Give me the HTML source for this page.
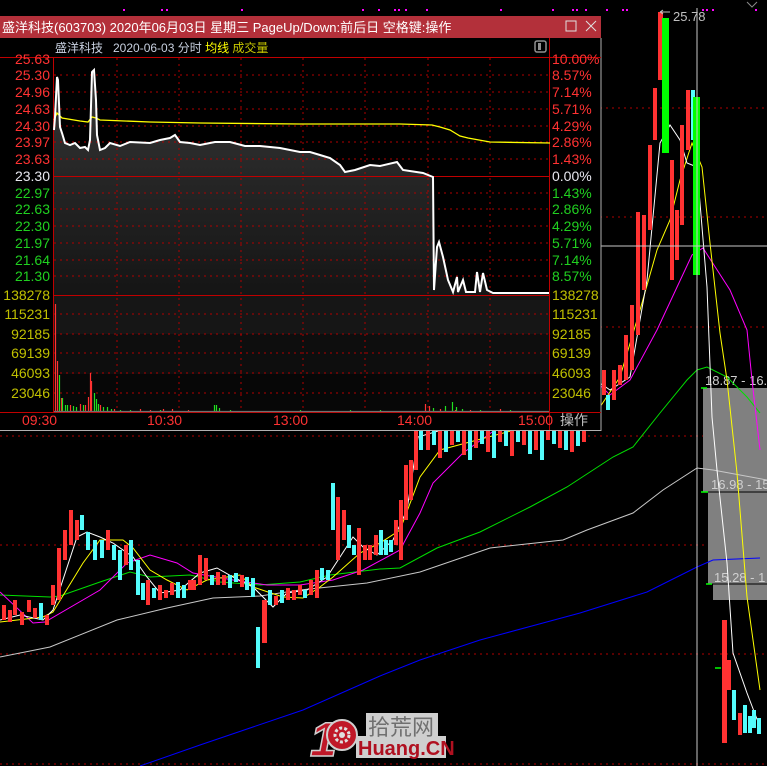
<!DOCTYPE html>
<html><head><meta charset="utf-8">
<style>
html,body{margin:0;padding:0;background:#000;overflow:hidden}
svg{display:block}
text{font-family:"Liberation Sans","Noto Sans CJK SC",sans-serif}
</style></head>
<body>
<svg width="767" height="766" viewBox="0 0 767 766" xmlns="http://www.w3.org/2000/svg">
<defs>
<linearGradient id="fg" x1="0" y1="0" x2="0" y2="1">
<stop offset="0" stop-color="#383838"/><stop offset="0.5" stop-color="#252525"/><stop offset="1" stop-color="#151515"/>
</linearGradient>
</defs>
<rect width="767" height="766" fill="#000"/>
<g stroke="#b00000" stroke-width="1" stroke-dasharray="2,4">
<line x1="600" y1="108" x2="767" y2="108"/>
<line x1="600" y1="217" x2="767" y2="217"/>
<line x1="600" y1="327" x2="767" y2="327"/>
<line x1="0" y1="436" x2="767" y2="436"/>
<line x1="0" y1="545" x2="767" y2="545"/>
<line x1="0" y1="654" x2="767" y2="654"/>
<line x1="0" y1="764" x2="767" y2="764"/>
</g>
<g fill="#ff00ff">
<rect x="123" y="9" width="2" height="2"/><rect x="161" y="9" width="2" height="2"/><rect x="166" y="9" width="2" height="2"/><rect x="241" y="9" width="2" height="2"/>
<rect x="362" y="9" width="2" height="2"/><rect x="378" y="9" width="2" height="2"/><rect x="394" y="9" width="2" height="2"/><rect x="398" y="9" width="2" height="2"/><rect x="405" y="9" width="2" height="2"/><rect x="426" y="9" width="2" height="2"/>
<rect x="500" y="9" width="2" height="2"/><rect x="552" y="9" width="2" height="2"/><rect x="572" y="9" width="2" height="2"/><rect x="576" y="9" width="2" height="2"/><rect x="585" y="9" width="2" height="2"/>
<rect x="606" y="9" width="2" height="2"/><rect x="622" y="9" width="2" height="2"/><rect x="626" y="9" width="2" height="2"/><rect x="702" y="9" width="2" height="2"/><rect x="706" y="9" width="2" height="2"/><rect x="712" y="9" width="2" height="2"/><rect x="755" y="9" width="2" height="2"/>
</g>
<path d="M703 388H767V600H713V584H708V492H703Z" fill="#808080"/>
<g stroke="#000" stroke-width="1"><line x1="703" y1="492" x2="767" y2="492"/><line x1="708" y1="584" x2="767" y2="584"/></g>
<g fill="#d0d0d0" font-size="13">
<text x="705" y="385">18.87 - 16.</text>
<text x="711" y="489">16.98 - 15</text>
<text x="714" y="582">15.28 - 1</text>
</g>
<g stroke="#00ff00" stroke-width="1.5"><line x1="701" y1="388" x2="707" y2="388"/><line x1="701" y1="492" x2="708" y2="492"/><line x1="706" y1="584" x2="712" y2="584"/><line x1="715" y1="668" x2="721" y2="668"/></g>
<g fill="none" stroke-width="1">
<polyline stroke="#0000ff" points="140,766 200,745 303,710 380,676 420,660 480,640 580,613 647,592 697,567 713,560 760,558"/>
<polyline stroke="#c8c8c8" points="0,657 50,647 117,620 167,608 213,598 260,596 300,590 367,583 420,572 490,548 563,540 587,530 633,513 663,490 697,468 713,470 767,480"/>
<polyline stroke="#00e000" points="0,595 50,597 60,596 100,582 130,572 150,577 190,575 220,582 260,585 300,582 330,575 380,569 400,568 437,548 480,532 530,507 567,487 613,457 633,447 660,413 687,380 697,370 707,367 727,377 747,397 760,413"/>
<polyline stroke="#ff00ff" points="0,592 33,623 45,622 100,590 127,563 150,555 177,563 193,573 233,580 267,585 300,585 333,580 363,570 400,550 420,513 433,483 463,453 513,417 553,397 600,385 610,395 630,380 657,330 692,255 703,248 730,290 747,330 752,380 760,450"/>
<polyline stroke="#ffff00" points="0,622 43,617 53,612 83,563 100,540 123,540 133,548 150,570 167,580 187,590 207,580 240,575 253,587 283,597 303,598 320,587 333,577 360,553 380,543 400,530 420,477 440,450 600,407 620,377 640,310 657,250 670,220 680,180 692,143 702,167 710,243 720,333 727,380 737,473 747,597 760,690"/>
<polyline stroke="#ffffff" points="0,620 20,615 43,620 53,610 77,537 87,532 100,537 113,543 133,557 147,577 160,593 180,590 200,573 217,568 233,577 253,587 273,607 287,593 307,590 327,577 353,537 363,547 377,555 393,540 407,510 418,437 600,383 610,390 630,377 647,280 660,143 670,125 680,140 687,163 697,167 707,287 712,417 717,470 727,563 733,653 747,693 760,727"/>
</g>
<g>
<g fill="#ff3232">
<path d="M2 605h4v15h-4zM8 610h4v12h-4zM13 600h4v15h-4zM20 612h4v13h-4zM27 600h4v12h-4zM33 608h4v10h-4zM45 615h4v10h-4zM51 585h4v20h-4zM57 548h4v52h-4zM63 530h4v30h-4zM69 510h4v35h-4zM75 520h4v20h-4zM106 530h4v20h-4zM124 545h4v20h-4zM146 580h4v25h-4zM158 585h4v15h-4zM164 590h4v8h-4zM170 583h4v12h-4zM188 580h4v10h-4zM192 580h4v10h-4zM198 555h4v30h-4zM204 558h4v22h-4zM216 572h4v13h-4zM222 575h4v10h-4zM240 575h4v12h-4zM262 600h5v43h-5zM274 596h4v9h-4zM286 588h4v12h-4zM292 590h4v10h-4zM298 585h4v10h-4zM309 580h4v15h-4zM315 570h4v28h-4zM336 497h4v63h-4zM342 510h4v30h-4zM357 528h4v47h-4zM363 545h4v15h-4zM368 545h4v15h-4zM374 535h4v20h-4zM394 520h4v25h-4zM399 500h4v60h-4zM404 465h4v55h-4zM409 460h4v40h-4zM414 430h4v40h-4z"/>
<path d="M426 430h4v20h-4zM438 430h4v28h-4zM450 430h4v15h-4zM462 430h4v25h-4zM474 430h4v18h-4zM486 430h4v22h-4zM498 430h4v12h-4zM510 430h4v26h-4zM522 430h4v15h-4zM534 430h4v20h-4zM546 430h4v10h-4zM558 430h4v18h-4zM570 430h4v22h-4zM582 430h4v12h-4z"/>
<path d="M602 370h4v25h-4zM612 370h4v30h-4zM618 365h4v20h-4zM624 335h4v45h-4zM630 305h4v65h-4zM636 212h4v123h-4zM642 215h4v75h-4zM648 145h4v85h-4zM653 88h4v52h-4zM658 12h5v68h-5zM670 160h4v120h-4zM675 210h4v50h-4zM680 125h4v100h-4zM686 90h4v60h-4zM722 620h5v123h-5zM727 660h4v30h-4zM738 713h4v22h-4z"/>
</g>
<g fill="#54fcfc">
<path d="M39 603h4v17h-4zM80 515h4v15h-4zM86 532h4v18h-4zM93 540h4v20h-4zM100 540h4v18h-4zM112 545h4v15h-4zM118 550h4v30h-4zM129 540h4v30h-4zM136 560h4v35h-4zM141 583h4v17h-4zM152 588h4v10h-4zM176 582h4v16h-4zM182 585h4v13h-4zM210 575h4v10h-4zM228 575h4v13h-4zM234 573h4v9h-4zM245 577h4v13h-4zM251 578h4v19h-4zM256 627h4v41h-4zM268 590h4v15h-4zM280 590h4v13h-4zM303 590h4v8h-4zM320 568h4v12h-4zM326 570h4v10h-4zM331 483h4v47h-4zM347 525h4v23h-4zM352 545h4v10h-4zM379 530h4v25h-4zM384 540h4v15h-4zM389 540h4v12h-4zM419 430h4v20h-4z"/>
<path d="M432 430h4v15h-4zM444 430h4v22h-4zM456 430h4v12h-4zM468 430h4v30h-4zM480 430h4v14h-4zM492 430h4v28h-4zM504 430h4v16h-4zM516 430h4v12h-4zM528 430h4v24h-4zM540 430h4v30h-4zM552 430h4v14h-4zM564 430h4v20h-4zM576 430h4v16h-4z"/>
<path d="M606 395h4v15h-4zM691 90h4v50h-4zM732 690h4v30h-4zM743 705h4v28h-4zM748 716h4v17h-4zM752 710h4v18h-4zM757 718h4v16h-4z"/>
</g>
<g fill="#00ff00"><rect x="662" y="18" width="7" height="135"/><rect x="693" y="97" width="7" height="178"/></g>
</g>
<line x1="697" y1="8" x2="697" y2="766" stroke="#c8c8c8"/>
<line x1="600" y1="246" x2="767" y2="246" stroke="#c8c8c8"/>
<text x="673" y="21" fill="#c0c0c0" font-size="13">25.78</text>
<path d="M660 12l3 2m-3-2l3-2m-3 2h10" stroke="#c0c0c0" fill="none"/>
<path d="M747 2l5 5 5-5" stroke="#888" fill="none"/>

<rect x="0" y="16" width="601" height="415" fill="#000"/>
<rect x="0" y="16" width="601" height="22" fill="#b3303a"/>
<text x="2" y="32" fill="#fff" font-size="13">盛洋科技(603703) 2020年06月03日 星期三 PageUp/Down:前后日 空格键:操作</text>
<rect x="566" y="21" width="10" height="10" fill="none" stroke="#e0e0e0"/>
<path d="M586 21l10 10M596 21l-10 10" stroke="#e0e0e0"/>
<line x1="601" y1="38" x2="601" y2="431" stroke="#b0b0b0"/>
<line x1="0" y1="430.5" x2="601" y2="430.5" stroke="#b0b0b0"/>
<text x="55" y="52" fill="#c8d0e0" font-size="12">盛洋科技 <tspan x="113">2020-06-03 分时</tspan> <tspan fill="#ffff00">均线</tspan> <tspan fill="#c8c800">成交量</tspan></text>
<rect x="535" y="41" width="11" height="11" rx="2" fill="none" stroke="#909090" stroke-width="1.5"/><rect x="538" y="43" width="3" height="7" fill="#909090"/>
<polygon fill="url(#fg)" points="54,130 55,117 57,77 58,80 60,127 62,133 65,143 70,145 75,143 80,148 85,147 88,150 90,140 92,72 94,70 96,100 97,135 100,150 105,148 110,143 120,146 130,142 150,143 160,140 170,138 175,135 180,142 190,143 200,145 215,142 230,142 245,146 260,146 280,148 300,152 310,152 320,155 330,158 340,165 345,172 355,170 370,165 380,166 397,162 403,170 423,173 433,177 434,290 437,247 439,242 443,257 448,280 453,292 457,277 458,292 463,280 466,292 475,292 477,272 480,292 483,273 487,290 493,293 549,293 549,295 54,295"/>
<rect x="54" y="296" width="495" height="38" fill="#161616"/>
<rect x="54" y="334" width="495" height="40" fill="#0e0e0e"/>
<rect x="54" y="374" width="495" height="38" fill="#070707"/>
<g stroke="#b00000" stroke-dasharray="2,4">
<path d="M54 75H549M54 92H549M54 109H549M54 126H549M54 142H549M54 159H549M54 193H549M54 209H549M54 226H549M54 243H549M54 260H549M54 276H549M54 314H549M54 334H549M54 353H549M54 373H549M54 393H549"/>
<path d="M117 58V412M179 58V412M241 58V412M303 58V412M365 58V412M428 58V412M490 58V412"/>
</g>
<g stroke="#c00000" stroke-width="1">
<line x1="53.5" y1="57" x2="53.5" y2="412"/>
<line x1="549.5" y1="38" x2="549.5" y2="430"/>
<line x1="0" y1="57.5" x2="601" y2="57.5"/>
<line x1="54" y1="176.5" x2="549" y2="176.5"/>
<line x1="54" y1="295.5" x2="549" y2="295.5"/>
<line x1="0" y1="412.5" x2="601" y2="412.5"/>
</g>
<g stroke-width="1.2">
<path stroke="#ff3232" d="M55.5 412V304M57.5 412V361M61.5 412V398M70.5 412V405M80.5 412V404M85.5 412V405M88.5 412V397M90.5 412V373M91.5 412V381M100.5 412V405M114.5 412V409M140.5 412V409M150.5 412V410M163.5 412V409M172.5 412V409M188.5 412V410M425.5 412V404M429.5 412V406M440.5 412V409M455.5 412V410M470.5 412V410M500.5 412V409"/>
<path stroke="#20e020" d="M59.5 412V375M62.5 412V398M65.5 412V405M67.5 412V405M73.5 412V406M76.5 412V407M83.5 412V405M94.5 412V393M96.5 412V399M98.5 412V404M103.5 412V407M107.5 412V407M111.5 412V409M120.5 412V410M130.5 412V410M160.5 412V410M214.5 412V405M216.5 412V405M219.5 412V408M230.5 412V410M300.5 412V410M350.5 412V410M380.5 412V410M433.5 412V408M445.5 412V406M452.5 412V402M456.5 412V407M462.5 412V409M480.5 412V410M510.5 412V410"/>
<path stroke="#707070" d="M54 411.5H549"/>
</g>
<polyline fill="none" stroke="#ffff00" stroke-width="1.3" points="54,120 57,113 62,118 80,121 88,122 92,117 96,118 100,120 150,122 200,123 300,124 400,124 432,125 440,127 450,130 455,133 460,136 468,138 490,142 550,143"/>
<polyline fill="none" stroke="#fff" stroke-width="2" points="54,130 55,117 57,77 58,80 60,127 62,133 65,143 70,145 75,143 80,148 85,147 88,150 90,140 92,72 94,70 96,100 97,135 100,150 105,148 110,143 120,146 130,142 150,143 160,140 170,138 175,135 180,142 190,143 200,145 215,142 230,142 245,146 260,146 280,148 300,152 310,152 320,155 330,158 340,165 345,172 355,170 370,165 380,166 397,162 403,170 423,173 433,177 434,290 437,247 439,242 443,257 448,280 453,292 457,277 458,292 463,280 466,292 475,292 477,272 480,292 483,273 487,290 493,293 549,293"/>
<g font-size="14" text-anchor="end">
<g fill="#ff3232"><text x="50" y="64">25.63</text><text x="50" y="80">25.30</text><text x="50" y="97">24.96</text><text x="50" y="114">24.63</text><text x="50" y="131">24.30</text><text x="50" y="147">23.97</text><text x="50" y="164">23.63</text></g>
<text x="50" y="181" fill="#e8e8f0">23.30</text>
<g fill="#20d020"><text x="50" y="198">22.97</text><text x="50" y="214">22.63</text><text x="50" y="231">22.30</text><text x="50" y="248">21.97</text><text x="50" y="265">21.64</text><text x="50" y="281">21.30</text></g>
<g fill="#c0c000"><text x="50" y="300">138278</text><text x="50" y="319">115231</text><text x="50" y="339">92185</text><text x="50" y="358">69139</text><text x="50" y="378">46093</text><text x="50" y="398">23046</text></g>
</g>
<g font-size="14">
<g fill="#ff3232"><text x="552" y="64">10.00%</text><text x="552" y="80">8.57%</text><text x="552" y="97">7.14%</text><text x="552" y="114">5.71%</text><text x="552" y="131">4.29%</text><text x="552" y="147">2.86%</text><text x="552" y="164">1.43%</text></g>
<text x="552" y="181" fill="#e8e8f0">0.00%</text>
<g fill="#20d020"><text x="552" y="198">1.43%</text><text x="552" y="214">2.86%</text><text x="552" y="231">4.29%</text><text x="552" y="248">5.71%</text><text x="552" y="265">7.14%</text><text x="552" y="281">8.57%</text></g>
<g fill="#c0c000"><text x="552" y="300">138278</text><text x="552" y="319">115231</text><text x="552" y="339">92185</text><text x="552" y="358">69139</text><text x="552" y="378">46093</text><text x="552" y="398">23046</text></g>
<g fill="#ff3232"><text x="22" y="425">09:30</text><text x="147" y="425">10:30</text><text x="273" y="425">13:00</text><text x="397" y="425">14:00</text><text x="518" y="425">15:00</text></g>
<text x="560" y="425" fill="#c0c0c0">操作</text>
</g>
<rect x="366" y="713" width="72" height="26" fill="#cfcfcf"/>
<rect x="356" y="736" width="90" height="22" fill="#cfcfcf"/>
<text x="368" y="735" fill="#707070" font-size="22" font-family="Noto Sans CJK SC,sans-serif">拾荒网</text>
<text x="358" y="755" fill="#b01020" font-size="20" font-weight="bold">Huang.CN</text>
<text x="310" y="756" fill="#c01828" font-size="48" font-weight="bold" font-style="italic" stroke="#d0d0d0" stroke-width="1.5">1</text>
<circle cx="342" cy="735" r="15" fill="#c01828" stroke="#d0d0d0" stroke-width="2"/>
<circle cx="342" cy="735" r="7" fill="none" stroke="#e0e0e0" stroke-width="3" stroke-dasharray="3,2"/>
<circle cx="342" cy="735" r="3" fill="#e0e0e0"/>
</svg>
</body></html>
